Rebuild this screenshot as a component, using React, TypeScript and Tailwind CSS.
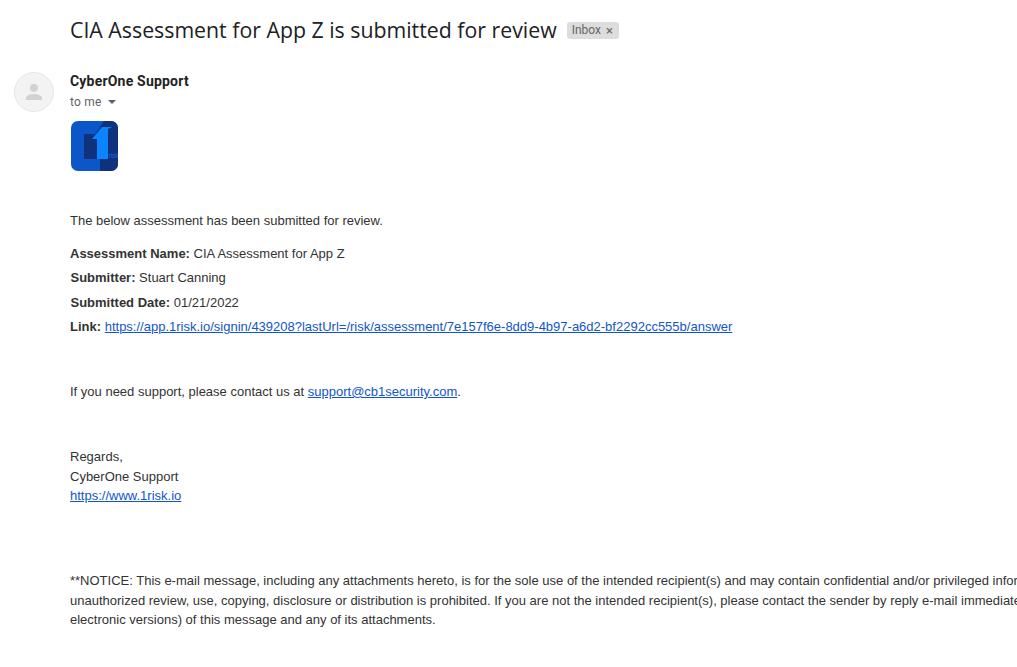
const body = "font-['Liberation_Sans',Arial,sans-serif] text-[13px] text-[#333333]";
const linkClass = "text-[#1155cc] underline";

function Logo() {
  return (
    <svg width="47" height="50" viewBox="0 0 47 50" className="block">
      <rect x="0" y="0" width="47" height="50" rx="7" fill="#0b57c9" />
      <path d="M33 0H40a7 7 0 0 1 7 7V43a7 7 0 0 1-7 7H29V36H25V18H21Z" fill="#10317c" />
      <rect x="13" y="13" width="13" height="25" fill="#10317c" />
      <path d="M21 18 31 6H41L37 8V38H26V18Z" fill="#0a84ff" />
      <text x="37.5" y="37" fontSize="6.5" fill="#0a6fe0" fontFamily="Liberation Sans, sans-serif">risk</text>
    </svg>
  );
}

function Avatar() {
  return (
    <div className="flex h-10 w-10 items-center justify-center rounded-full border border-[#e6e6e6] bg-[#f3f3f3]">
      <svg width="24" height="24" viewBox="0 0 24 24" fill="#d2d2d2">
        <circle cx="12" cy="8" r="4" />
        <path d="M4 18c0-2.7 5.3-4 8-4s8 1.3 8 4v2H4z" />
      </svg>
    </div>
  );
}

export default function App() {
  return (
    <div className="h-[667px] w-[1017px] overflow-hidden bg-white">
      <div className="flex items-center pl-[70px] pt-[15px]">
        <h1 className="font-['Open_Sans',sans-serif] text-[21.3px] leading-[30px] text-[#202124]">
          CIA Assessment for App Z is submitted for review
        </h1>
        <span className="ml-[10px] flex h-[17px] w-[52px] items-center rounded-[3px] bg-[#dddddd] px-[5px] font-['Roboto',sans-serif] text-[12px] text-[#666666]">
          Inbox <span className="ml-[5px] text-[13px] leading-none">×</span>
        </span>
      </div>

      <div className="flex pl-[14px] pt-[27px]">
        <Avatar />
        <div className="-mt-[1px] ml-4">
          <div className="font-['Roboto',sans-serif] text-[14px] leading-[20px] font-bold tracking-[0.2px] text-[#222222]">CyberOne Support</div>
          <div className="mt-[1px] flex items-center font-['Roboto',sans-serif] text-[12px] leading-[20px] tracking-[0.2px] text-[#5f6368]">
            to me
            <span className="ml-[6px] h-0 w-0 border-x-[4px] border-t-[4px] border-x-transparent border-t-[#5f6368]" />
          </div>
          <div className="ml-[1px] mt-[9px]"><Logo /></div>
        </div>
      </div>

      <div className={`${body} pl-[70px] pt-[40px] leading-[20px]`}>
        <p>The below assessment has been submitted for review.</p>
        <p className="mt-[13px]"><b>Assessment Name:</b> CIA Assessment for App Z</p>
        <p className="mt-[4px] pl-[0.5px]"><b>Submitter:</b> Stuart Canning</p>
        <p className="mt-[5px] pl-[0.5px]"><b>Submitted Date:</b> 01/21/2022</p>
        <p className="mt-[4px]">
          <b>Link:</b>{" "}
          <a className={linkClass}>https://app.1risk.io/signin/439208?lastUrl=/risk/assessment/7e157f6e-8dd9-4b97-a6d2-bf2292cc555b/answer</a>
        </p>
        <p className="mt-[45px]">
          If you need support, please contact us at <a className={linkClass}>support@cb1security.com</a>.
        </p>
        <p className="mt-[45px]">Regards,</p>
        <p>CyberOne Support</p>
        <p className="-mt-[1px]"><a className={linkClass}>https://www.1risk.io</a></p>
        <div className="mt-[65px] whitespace-nowrap leading-[19.5px]">
          <p>**NOTICE: This e-mail message, including any attachments hereto, is for the sole use of the intended recipient(s) and may contain confidential and/or privileged information. Any</p>
          <p>unauthorized review, use, copying, disclosure or distribution is prohibited. If you are not the intended recipient(s), please contact the sender by reply e-mail immediately and destroy all copies (paper and</p>
          <p>electronic versions) of this message and any of its attachments.</p>
        </div>
      </div>
    </div>
  );
}
